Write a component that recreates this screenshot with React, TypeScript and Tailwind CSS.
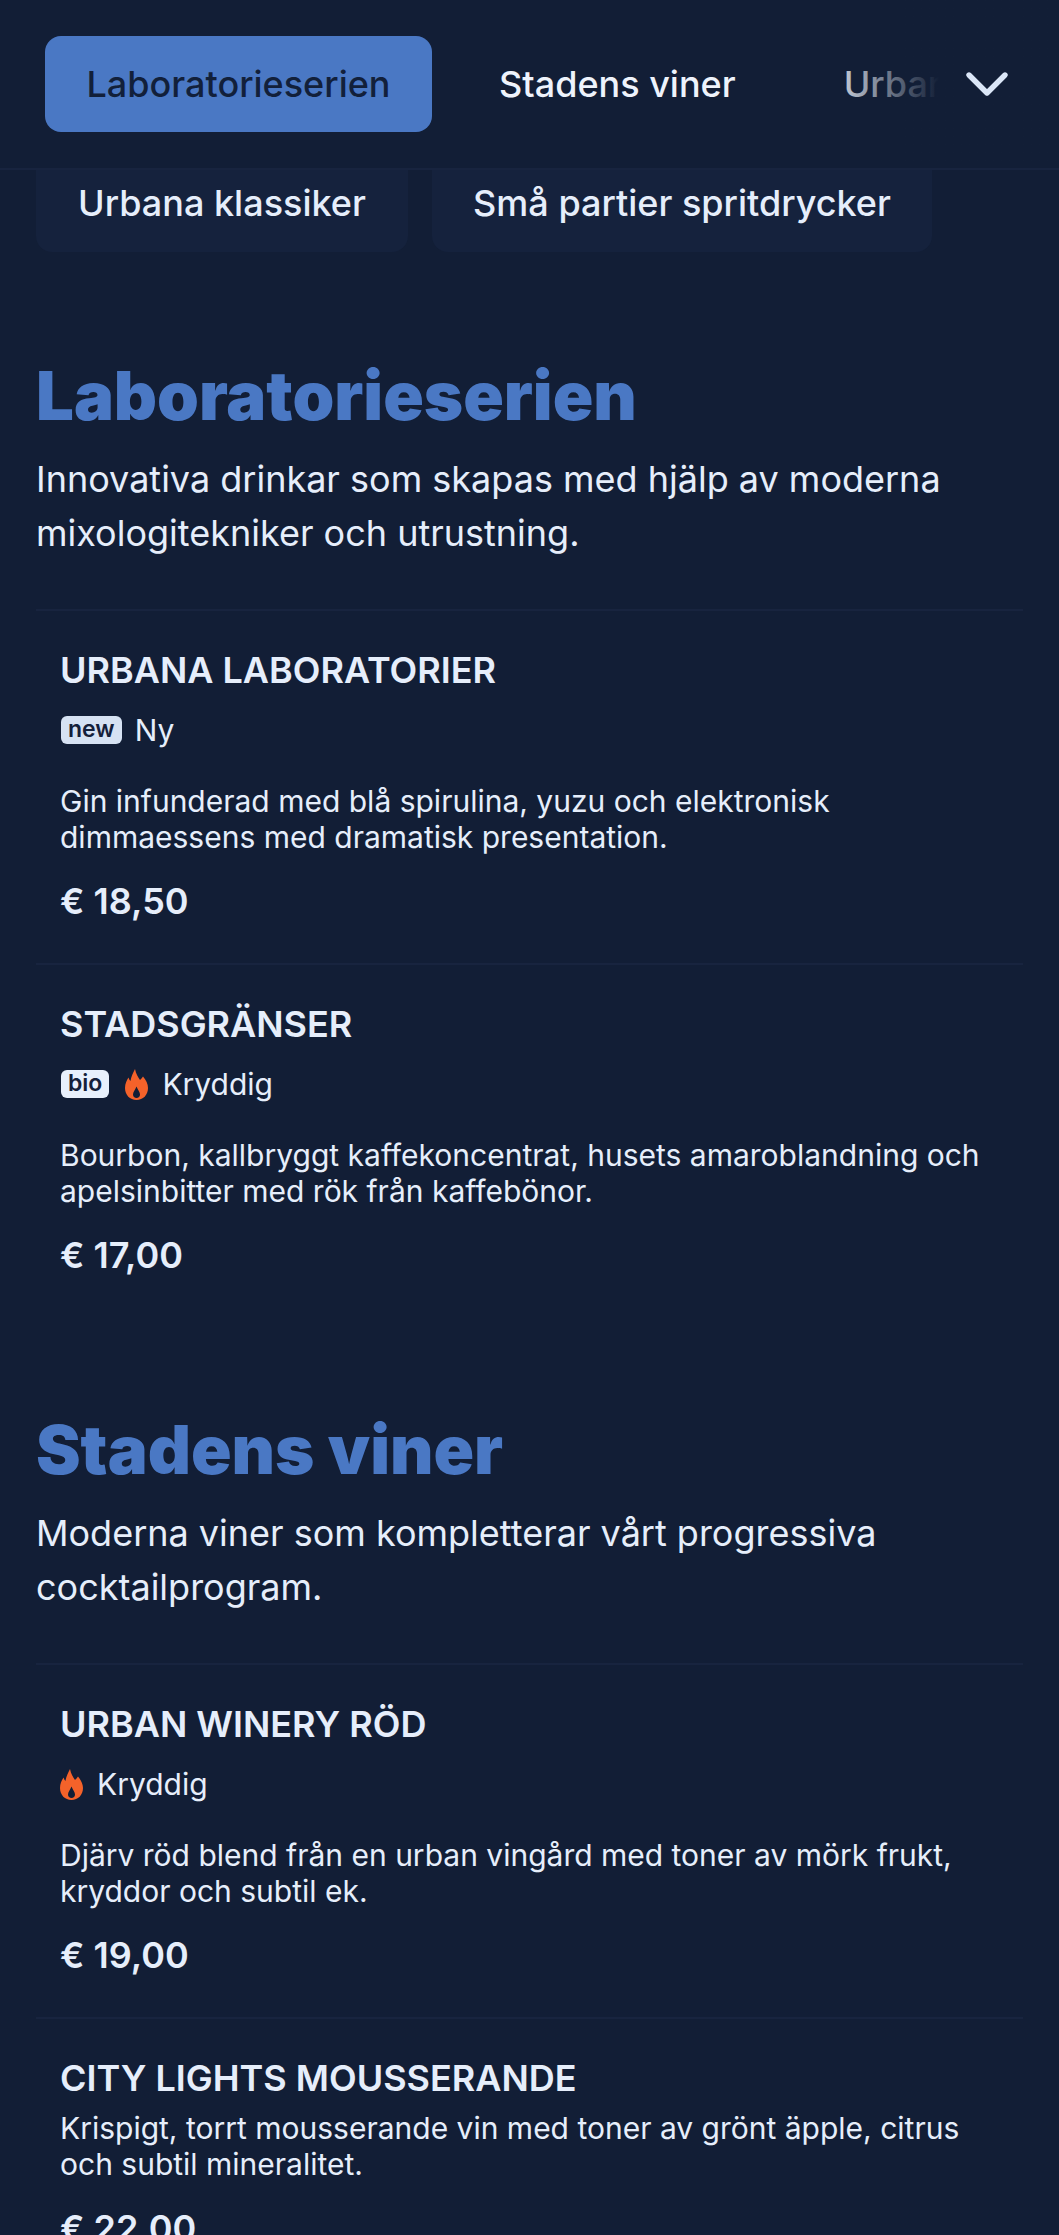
import { ChevronDown } from 'lucide-react'

type Item = {
  name: string
  badge?: string
  spicy?: boolean
  label?: string
  desc: string
  price: string
}

const SECTIONS: { title: string; intro: string; items: Item[] }[] = [
  {
    title: 'Laboratorieserien',
    intro: 'Innovativa drinkar som skapas med hjälp av moderna mixologitekniker och utrustning.',
    items: [
      { name: 'URBANA LABORATORIER', badge: 'new', label: 'Ny', desc: 'Gin infunderad med blå spirulina, yuzu och elektronisk dimmaessens med dramatisk presentation.', price: '€ 18,50' },
      { name: 'STADSGRÄNSER', badge: 'bio', spicy: true, label: 'Kryddig', desc: 'Bourbon, kallbryggt kaffekoncentrat, husets amaroblandning och apelsinbitter med rök från kaffebönor.', price: '€ 17,00' },
    ],
  },
  {
    title: 'Stadens viner',
    intro: 'Moderna viner som kompletterar vårt progressiva cocktailprogram.',
    items: [
      { name: 'URBAN WINERY RÖD', spicy: true, label: 'Kryddig', desc: 'Djärv röd blend från en urban vingård med toner av mörk frukt, kryddor och subtil ek.', price: '€ 19,00' },
      { name: 'CITY LIGHTS MOUSSERANDE', desc: 'Krispigt, torrt mousserande vin med toner av grönt äpple, citrus och subtil mineralitet.', price: '€ 22,00' },
    ],
  },
]

function Flame() {
  return (
    <svg viewBox="0 0 23 31" className="w-[23px] h-[31px] shrink-0 block">
      <path
        fill="#f4622a"
        fillRule="evenodd"
        d="M10 0C11 5 13 8 15 11C16 10 17 9 18 7.500C21 11 23 15 23 19C23 26 18 31 11.500 31C5 31 0 26 0 19C0 14.500 2 11 3.500 8.500C4 10 4.500 11 5.500 12C6 8 8 4 10 0zM11.500 17.500C10 21 8 23 8 25.500C8 27.800 9.500 29 11.500 29C13.500 29 15 27.800 15 25.500C15 23 13 21 11.500 17.500z"
      />
    </svg>
  )
}

function MenuItem({ item }: { item: Item }) {
  return (
    <div className="border-t-2 border-[#18243f] px-6 pt-[38px] h-[354px]">
      <h3 className="text-[36px] leading-[42px] font-semibold text-[#e6eefb]">{item.name}</h3>
      {item.label && (
        <div className="flex items-center mt-[18px] mb-[32px] h-[42px]">
          {item.badge && (
            <span className={`h-[28px] ml-[1px] px-[7px] mr-[13px] rounded-[6px] text-[23px] leading-[26px] font-semibold text-[#14203a] ${item.badge === 'new' ? 'bg-[#d6e2f3]' : 'bg-[#e8f0fc]'}`}>
              {item.badge}
            </span>
          )}
          {item.spicy && (
            <span className={`mr-[14px] ${item.badge ? 'ml-[3px]' : ''}`}>
              <Flame />
            </span>
          )}
          <span className="text-[30px] leading-[42px] text-[#e6eefb]">{item.label}</span>
        </div>
      )}
      <p className={`text-[30px] leading-[36px] text-[#e6eefb] ${item.label ? '' : 'mt-[11px]'}`}>{item.desc}</p>
      <div className="text-[36px] leading-[44px] font-semibold text-[#e6eefb] mt-[24px]">{item.price}</div>
    </div>
  )
}

export default function App() {
  return (
    <div className="h-[2235px] overflow-hidden bg-[#121e36] font-['Inter',sans-serif]">
      {/* sticky tab bar */}
      <div className="relative h-[170px] border-b-2 border-[#18243f] flex items-center pl-[45px] overflow-hidden">
        <div className="flex items-center whitespace-nowrap text-[36px] font-medium">
          <div className="w-[387px] h-[96px] flex items-center justify-center rounded-[16px] bg-[#4a78c4] text-[#12203a]">
            Laboratorieserien
          </div>
          <div className="ml-[67px] text-[#eef3fc]">Stadens viner</div>
          <div className="ml-[108px] text-[#eef3fc]">Urbana klassiker</div>
        </div>
        <div className="absolute right-0 top-0 bottom-0 w-[240px] bg-gradient-to-r from-transparent via-[#121e36] via-50% to-[#121e36]" />
        <ChevronDown className="absolute left-[951px] top-[48px] w-[72px] h-[72px] text-[#dbe6f7]" strokeWidth={1.8} />
      </div>

      {/* category chips */}
      <div className="flex gap-[24px] pl-[36px]">
        <div className="w-[372px] h-[82px] pb-[16px] flex items-center justify-center rounded-b-[16px] bg-[#15223d] text-[36px] font-medium text-[#e6eefb]">
          Urbana klassiker
        </div>
        <div className="w-[500px] h-[82px] pb-[16px] flex items-center justify-center rounded-b-[16px] bg-[#15223d] text-[36px] font-medium text-[#e6eefb]">
          Små partier spritdrycker
        </div>
      </div>

      <div className="px-[36px] pt-[104px]">
        {SECTIONS.map((section, i) => (
          <section key={section.title} className={i > 0 ? 'mt-[93px]' : ''}>
            <h2 className="text-[67px] leading-[80px] font-black text-[#4a78c4]">{section.title}</h2>
            <p className="mt-[16px] text-[36px] leading-[54px] text-[#e6eefb]">{section.intro}</p>
            <div className="mt-[49px]">
              {section.items.map((item) => (
                <MenuItem key={item.name} item={item} />
              ))}
            </div>
          </section>
        ))}
      </div>
    </div>
  )
}
